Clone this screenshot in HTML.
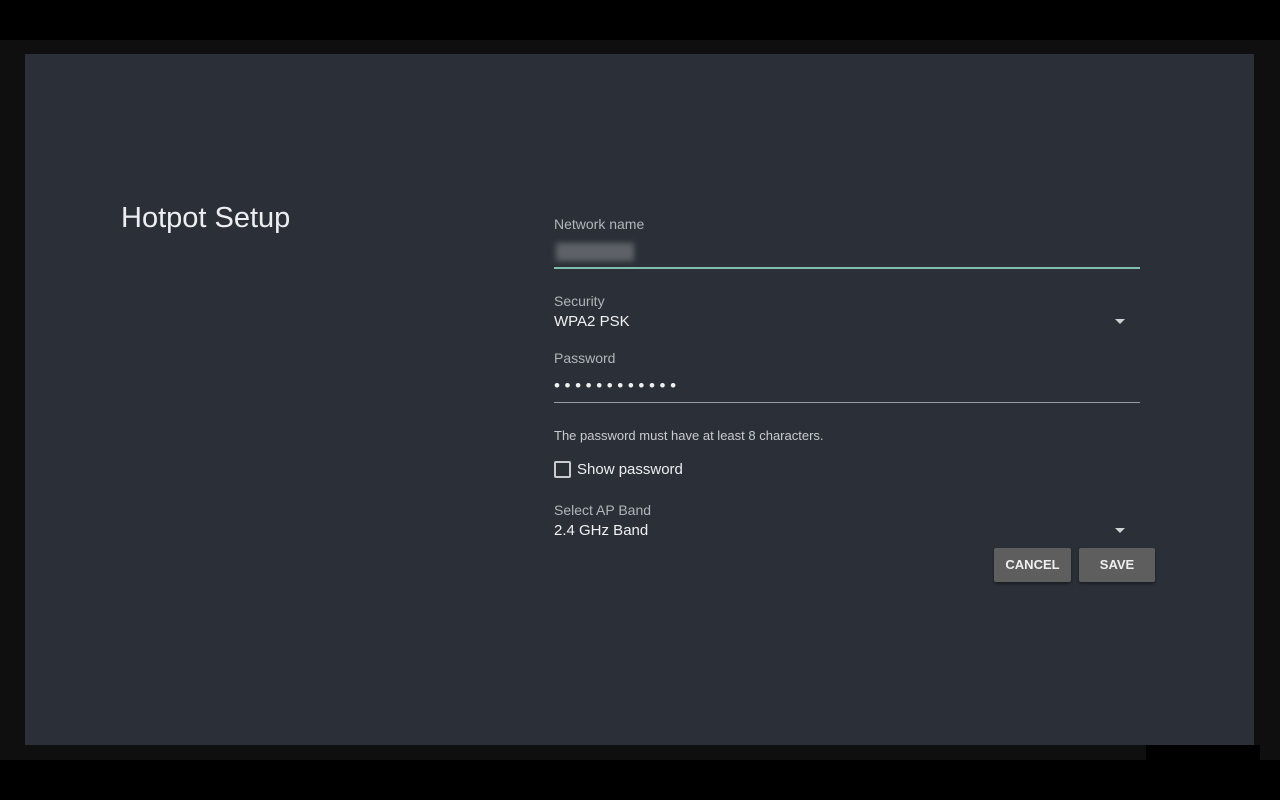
<!DOCTYPE html><html><head><style>
body{margin:0;width:1280px;height:800px;background:#000;position:relative;overflow:hidden;font-family:"Liberation Sans",sans-serif}
.a{position:absolute}
.t{position:absolute;white-space:nowrap}
</style></head><body>
<div class="a" style="left:0;top:40px;width:1280px;height:720px;background:#0f0f0f"></div>
<div class="a" style="left:1146px;top:745px;width:114px;height:15px;background:#000"></div>
<div class="a" style="left:25px;top:54px;width:1229px;height:691px;background:#2b3038"></div>
<div class="t" style="left:121px;top:202px;font-size:29px;color:#eceff1">Hotpot Setup</div>
<div class="t" style="left:554px;top:216px;font-size:14px;color:#b0b5ba">Network name</div>
<div class="a" style="left:556px;top:243px;width:78px;height:18px;background:#5d6168;filter:blur(3px)"></div>
<div class="a" style="left:554px;top:267px;width:586px;height:2px;background:#7fbfb0"></div>
<div class="t" style="left:554px;top:293px;font-size:14px;color:#b0b5ba">Security</div>
<div class="t" style="left:554px;top:313px;font-size:15px;color:#f0f0f0">WPA2 PSK</div>
<div class="a" style="left:1115px;top:319px;width:0;height:0;border-left:5px solid transparent;border-right:5px solid transparent;border-top:5px solid #cfd3d6"></div>
<div class="t" style="left:554px;top:350px;font-size:14px;color:#b0b5ba">Password</div>
<div class="t" style="left:554px;top:376px;font-size:17px;color:#f0f0f0;letter-spacing:4.6px">••••••••••••</div>
<div class="a" style="left:554px;top:402px;width:586px;height:1px;background:#9a9ea2"></div>
<div class="t" style="left:554px;top:428px;font-size:13px;color:#c8ccd0">The password must have at least 8 characters.</div>
<div class="a" style="left:554px;top:461px;border:2px solid #c8ccd0;border-radius:2px;box-sizing:border-box;width:17px;height:17px"></div>
<div class="t" style="left:577px;top:461px;font-size:15px;color:#eceff1">Show password</div>
<div class="t" style="left:554px;top:502px;font-size:14px;color:#b0b5ba">Select AP Band</div>
<div class="t" style="left:554px;top:522px;font-size:15px;color:#f0f0f0">2.4 GHz Band</div>
<div class="a" style="left:1115px;top:528px;width:0;height:0;border-left:5px solid transparent;border-right:5px solid transparent;border-top:5px solid #cfd3d6"></div>
<div class="a" style="left:994px;top:548px;width:77px;height:34px;background:#5e5e5e;border-radius:2px;box-shadow:0 2px 3px rgba(0,0,0,.4);color:#eee;font-size:13px;font-weight:bold;text-align:center;line-height:34px">CANCEL</div>
<div class="a" style="left:1079px;top:548px;width:76px;height:34px;background:#5e5e5e;border-radius:2px;box-shadow:0 2px 3px rgba(0,0,0,.4);color:#eee;font-size:13px;font-weight:bold;text-align:center;line-height:34px">SAVE</div>
</body></html>
